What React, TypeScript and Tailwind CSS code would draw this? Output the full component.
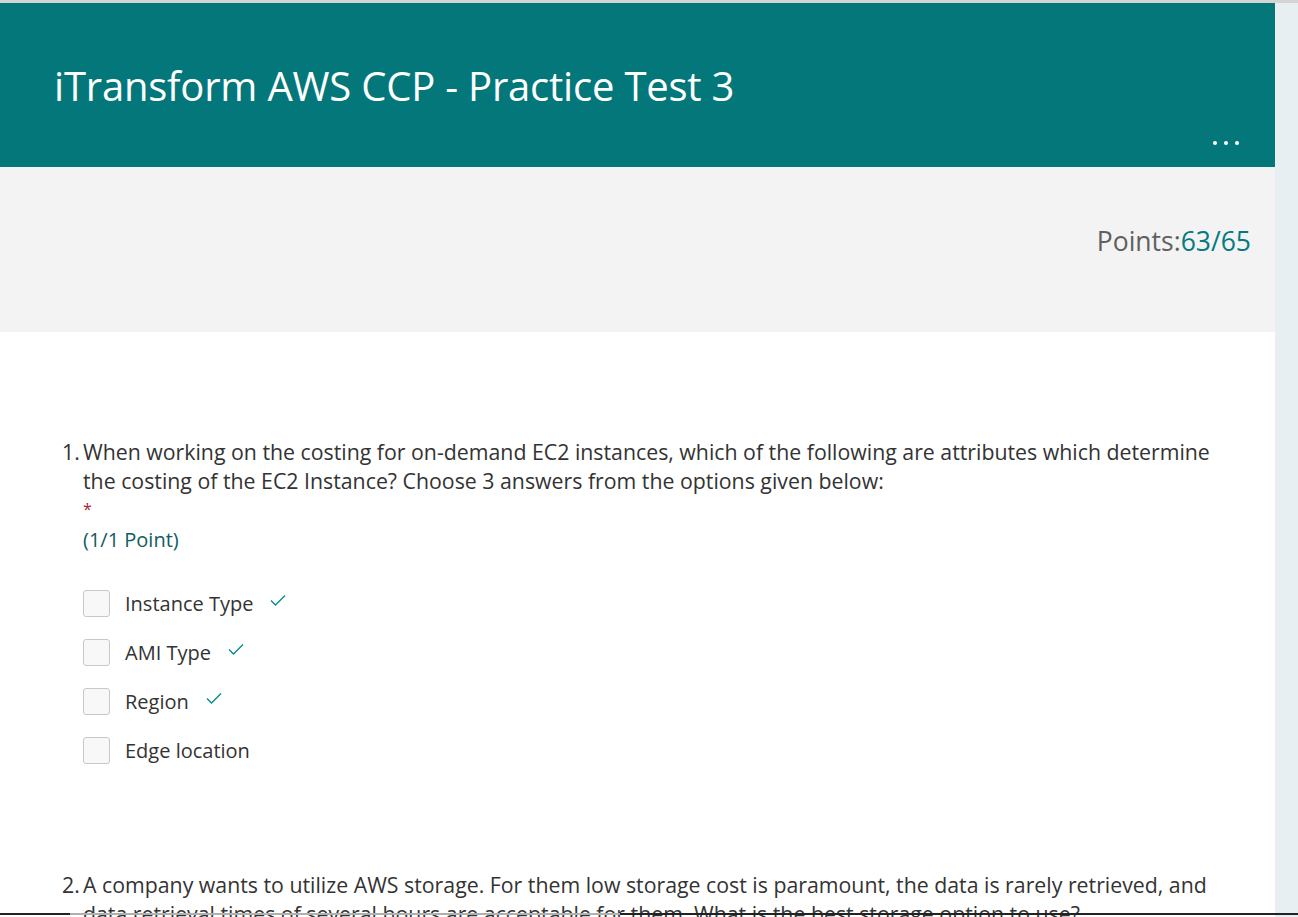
import React from 'react';

const font = { fontFamily: '"Segoe UI", "Open Sans", "Noto Sans", sans-serif' };

const options = [
  { label: 'Instance Type', correct: true },
  { label: 'AMI Type', correct: true },
  { label: 'Region', correct: true },
  { label: 'Edge location', correct: false },
];

const Check: React.FC = () => (
  <svg width="18" height="14" viewBox="0 0 18 14" className="ml-4 -mt-[6px]">
    <path d="M2 7.5 L6.5 12 L16 2.5" fill="none" stroke="#078a8f" strokeWidth="1.4" />
  </svg>
);

const App: React.FC = () => {
  return (
    <div className="w-[1298px] h-[917px] overflow-hidden bg-[#e8eff2] relative" style={font}>
      <div className="h-[3px] bg-[#d4d4d4]" />
      <div className="w-[1275px]">
        <header className="h-[164px] bg-[#04777b] relative">
          <h1 className="pl-[54px] pt-[58px] text-[40px] leading-[50px] text-white tracking-[-0.2px]">
            iTransform AWS CCP - Practice Test 3
          </h1>
          <div className="absolute right-[36px] top-[138px] flex gap-[7px]">
            <span className="w-[4px] h-[4px] rounded-full bg-white" />
            <span className="w-[4px] h-[4px] rounded-full bg-white" />
            <span className="w-[4px] h-[4px] rounded-full bg-white" />
          </div>
        </header>
        <div className="h-[165px] bg-[#f3f3f3] flex items-center justify-end pr-[24px] pb-[16px] text-[26.5px]">
          <span className="text-[#5f5f5f]">Points:</span>
          <span className="text-[#067a80]">63/65</span>
        </div>
        <main className="bg-white h-[600px] pt-[105px] text-[#333333] text-[21.3px] leading-[29px]">
          <section className="flex pl-[62px] pr-[50px]">
            <span className="w-[21px] shrink-0">1.</span>
            <div>
              <p>
                When working on the costing for on-demand EC2 instances, which of the following are attributes which
                determine the costing of the EC2 Instance? Choose 3 answers from the options given below:
              </p>
              <div className="text-[#a4262c] text-[16px] leading-[29px]">*</div>
              <div className="text-[#0f5d61] text-[20px] mt-[1px]">(1/1 Point)</div>
              <ul className="mt-[35px] flex flex-col gap-[21px] text-[20px]">
                {options.map((o) => (
                  <li key={o.label} className="flex items-center h-[28px]">
                    <span className="w-[27px] h-[27px] rounded-[3px] border border-[#c8c8c8] bg-[#f8f8f8]" />
                    <span className="ml-[15px]">{o.label}</span>
                    {o.correct && <Check />}
                  </li>
                ))}
              </ul>
            </div>
          </section>
          <section className="flex pl-[62px] pr-[50px] mt-[106px]">
            <span className="w-[21px] shrink-0">2.</span>
            <p>
              A company wants to utilize AWS storage. For them low storage cost is paramount, the data is rarely
              retrieved, and data retrieval times of several hours are acceptable for them. What is the best storage
              option to use?
            </p>
          </section>
        </main>
      </div>
      <div className="absolute left-0 bottom-[2px] w-full h-[2px] flex">
        <div className="w-[70px] bg-[#222]" />
        <div className="w-[550px] bg-[#b0b0b0]" />
        <div className="flex-1 bg-[#222]" />
      </div>
    </div>
  );
};

export default App;
